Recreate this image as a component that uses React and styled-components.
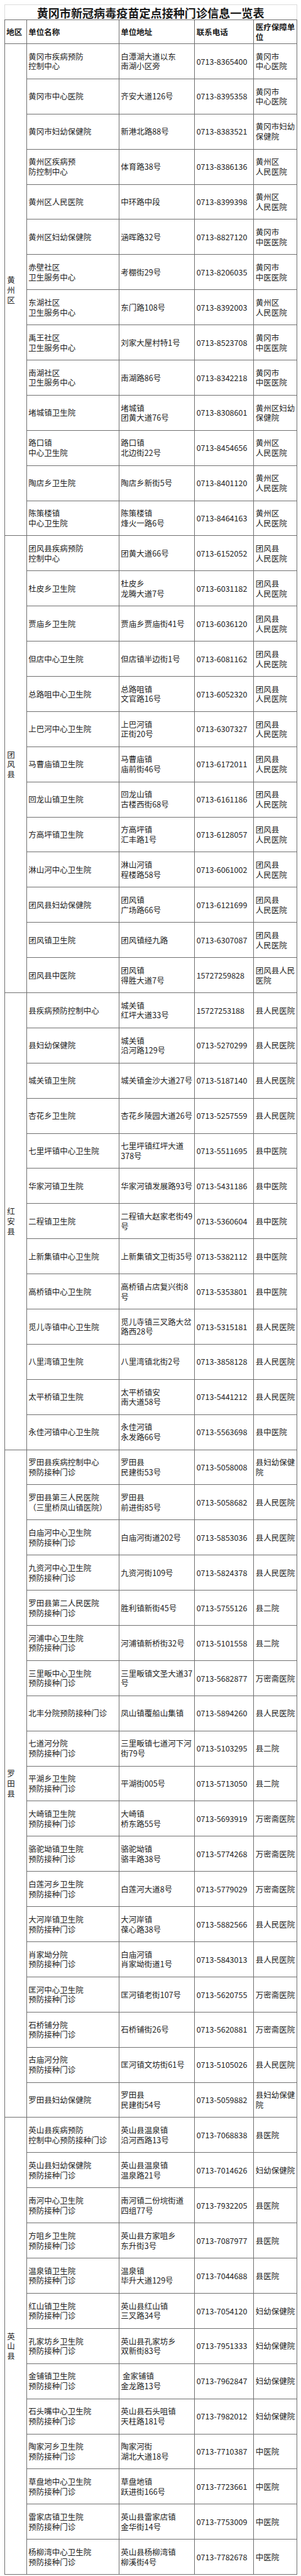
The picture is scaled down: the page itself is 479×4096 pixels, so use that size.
import React from "react";
import styled, { createGlobalStyle } from "styled-components";

const GlobalStyle = createGlobalStyle`
  body {
    margin: 0;
    background: #fff;
    font-family: "Noto Sans CJK SC", "Noto Sans", sans-serif;
    color: #222;
  }
`;

const LINE = "#6f6f6f";

const Page = styled.div`
  width: 479px;
  box-sizing: border-box;
  padding: 7.25px 6.5px 0 6.7px;
`;

const TitleBox = styled.div`
  height: 24px;
  box-sizing: border-box;
  border: 1px solid #dcdcdc;
  border-bottom: none;
  display: flex;
  align-items: center;
  justify-content: center;
  font-size: 18.1px;
  font-weight: 700;
  color: #1a1a1a;
  letter-spacing: 0;
`;

const Table = styled.div`
  display: grid;
  grid-template-columns: 35.1px 147px 120.4px 94.2px 68.6px;
  grid-template-rows: 37.7px;
  grid-auto-rows: 55.9px;
  border-top: 1px solid ${LINE};
  border-left: 1px solid ${LINE};
`;

const Cell = styled.div`
  box-sizing: border-box;
  border-right: 1px solid ${LINE};
  border-bottom: 1px solid ${LINE};
  padding-left: 2.5px;
  display: flex;
  align-items: center;
  font-size: 12.5px;
  line-height: 15.7px;
  white-space: pre;
`;

const HeadCell = styled(Cell)`
  font-weight: 700;
  color: #1a1a1a;
`;

const RegionCell = styled(Cell)`
  grid-row: span ${(p) => p.$span};
  padding-left: 3.5px;
  white-space: pre-line;
`;

const headers = ["地区", "单位名称", "单位地址", "联系电话", "医疗保障单\n位"];

const groups = [
  {
    region: "黄州区",
    rows: [
      ["黄冈市疾病预防\n控制中心", "白潭湖大道以东\n南湖小区旁", "0713-8365400", "黄冈市\n中心医院"],
      ["黄冈市中心医院", "齐安大道126号", "0713-8395358", "黄冈市\n中心医院"],
      ["黄冈市妇幼保健院", "新港北路88号", "0713-8383521", "黄冈市妇幼\n保健院"],
      ["黄州区疾病预\n防控制中心", "体育路38号", "0713-8386136", "黄州区\n人民医院"],
      ["黄州区人民医院", "中环路中段", "0713-8399398", "黄州区\n人民医院"],
      ["黄州区妇幼保健院", "涵晖路32号", "0713-8827120", "黄冈市\n中医医院"],
      ["赤壁社区\n卫生服务中心", "考棚街29号", "0713-8206035", "黄冈市\n中医医院"],
      ["东湖社区\n卫生服务中心", "东门路108号", "0713-8392003", "黄州区\n人民医院"],
      ["禹王社区\n卫生服务中心", "刘家大屋村特1号", "0713-8523708", "黄冈市\n中医医院"],
      ["南湖社区\n卫生服务中心", "南湖路86号", "0713-8342218", "黄冈市\n中医医院"],
      ["堵城镇卫生院", "堵城镇\n团黄大道76号", "0713-8308601", "黄州区妇幼\n保健院"],
      ["路口镇\n中心卫生院", "路口镇\n北边街22号", "0713-8454656", "黄州区\n人民医院"],
      ["陶店乡卫生院", "陶店乡新街5号", "0713-8401120", "黄州区\n人民医院"],
      ["陈策楼镇\n中心卫生院", "陈策楼镇\n烽火一路6号", "0713-8464163", "黄州区\n人民医院"],
    ],
  },
  {
    region: "团风县",
    rows: [
      ["团风县疾病预防\n控制中心", "团黄大道66号", "0713-6152052", "团风县\n人民医院"],
      ["杜皮乡卫生院", "杜皮乡\n龙腾大道7号", "0713-6031182", "团风县\n人民医院"],
      ["贾庙乡卫生院", "贾庙乡贾庙街41号", "0713-6036120", "团风县\n人民医院"],
      ["但店中心卫生院", "但店镇半边街1号", "0713-6081162", "团风县\n人民医院"],
      ["总路咀中心卫生院", "总路咀镇\n文官路16号", "0713-6052320", "团风县\n人民医院"],
      ["上巴河中心卫生院", "上巴河镇\n正街20号", "0713-6307327", "团风县\n人民医院"],
      ["马曹庙镇卫生院", "马曹庙镇\n庙前街46号", "0713-6172011", "团风县\n人民医院"],
      ["回龙山镇卫生院", "回龙山镇\n古楼西街68号", "0713-6161186", "团风县\n人民医院"],
      ["方高坪镇卫生院", "方高坪镇\n汇丰路1号", "0713-6128057", "团风县\n人民医院"],
      ["淋山河中心卫生院", "淋山河镇\n程楼路58号", "0713-6061002", "团风县\n人民医院"],
      ["团风县妇幼保健院", "团风镇\n广场路66号", "0713-6121699", "团风县\n人民医院"],
      ["团风镇卫生院", "团风镇经九路", "0713-6307087", "团风县\n人民医院"],
      ["团风县中医院", "团风镇\n得胜大道7号", "15727259828", "团风县人民\n医院"],
    ],
  },
  {
    region: "红安县",
    rows: [
      ["县疾病预防控制中心", "城关镇\n红坪大道33号", "15727253188", "县人民医院"],
      ["县妇幼保健院", "城关镇\n沿河路129号", "0713-5270299", "县人民医院"],
      ["城关镇卫生院", "城关镇金沙大道27号", "0713-5187140", "县人民医院"],
      ["杏花乡卫生院", "杏花乡陵园大道26号", "0713-5257559", "县人民医院"],
      ["七里坪镇中心卫生院", "七里坪镇红坪大道\n378号", "0713-5511695", "县中医院"],
      ["华家河镇卫生院", "华家河镇发展路93号", "0713-5431186", "县中医院"],
      ["二程镇卫生院", "二程镇大赵家老街49\n号", "0713-5360604", "县中医院"],
      ["上新集镇中心卫生院", "上新集镇文卫街35号", "0713-5382112", "县中医院"],
      ["高桥镇中心卫生院", "高桥镇占店复兴街8\n号", "0713-5353801", "县中医院"],
      ["觅儿寺镇中心卫生院", "觅儿寺镇三叉路大岔\n路西28号", "0713-5315181", "县人民医院"],
      ["八里湾镇卫生院", "八里湾镇北街2号", "0713-3858128", "县人民医院"],
      ["太平桥镇卫生院", "太平桥镇安\n南大道58号", "0713-5441212", "县人民医院"],
      ["永佳河镇中心卫生院", "永佳河镇\n永发路66号", "0713-5563698", "县中医院"],
    ],
  },
  {
    region: "罗田县",
    rows: [
      ["罗田县疾病控制中心\n预防接种门诊", "罗田县\n民建街53号", "0713-5058008", "县妇幼保健\n院"],
      ["罗田县第三人民医院\n（三里桥凤山镇医院）", "罗田县\n前进街85号", "0713-5058682", "县人民医院"],
      ["白庙河中心卫生院\n预防接种门诊", "白庙河街道202号", "0713-5853036", "县人民医院"],
      ["九资河中心卫生院\n预防接种门诊", "九资河街109号", "0713-5824378", "县人民医院"],
      ["罗田县第二人民医院\n预防接种门诊", "胜利镇新街45号", "0713-5755126", "县二院"],
      ["河浦中心卫生院\n预防接种门诊", "河浦镇新桥街32号", "0713-5101558", "县二院"],
      ["三里畈中心卫生院\n预防接种门诊", "三里畈镇文圣大道37\n号", "0713-5682877", "万密斋医院"],
      ["北丰分院预防接种门诊", "凤山镇覆船山集镇", "0713-5894260", "县人民医院"],
      ["七道河分院\n预防接种门诊", "三里畈镇七道河下河\n街79号", "0713-5103295", "县二院"],
      ["平湖乡卫生院\n预防接种门诊", "平湖街005号", "0713-5713050", "县二院"],
      ["大崎镇卫生院\n预防接种门诊", "大崎镇\n桥东路55号", "0713-5693919", "万密斋医院"],
      ["骆驼坳镇卫生院\n预防接种门诊", "骆驼坳镇\n骆丰路38号", "0713-5774268", "万密斋医院"],
      ["白莲河乡卫生院\n预防接种门诊", "白莲河大道8号", "0713-5779029", "万密斋医院"],
      ["大河岸镇卫生院\n预防接种门诊", "大河岸镇\n葆心路38号", "0713-5882566", "县人民医院"],
      ["肖家坳分院\n预防接种门诊", "白庙河镇\n肖家坳街道1号", "0713-5843013", "县人民医院"],
      ["匡河中心卫生院\n预防接种门诊", "匡河镇老街107号", "0713-5620755", "万密斋医院"],
      ["石桥铺分院\n预防接种门诊", "石桥铺街26号", "0713-5620881", "万密斋医院"],
      ["古庙河分院\n预防接种门诊", "匡河镇文坊街61号", "0713-5105026", "县人民医院"],
      ["罗田县妇幼保健院", "罗田县\n民建街54号", "0713-5059882", "县妇幼保健\n院"],
    ],
  },
  {
    region: "英山县",
    rows: [
      ["英山县疾病预防\n控制中心预防接种门诊", "英山县温泉镇\n沿河西路13号", "0713-7068838", "县医院"],
      ["英山县妇幼保健院\n预防接种门诊", "英山县温泉镇\n温泉路21号", "0713-7014626", "妇幼保健院"],
      ["南河中心卫生院\n预防接种门诊", "南河镇二份垸街道\n四组77号", "0713-7932205", "县医院"],
      ["方咀乡卫生院\n预防接种门诊", "英山县方家咀乡\n东升街3号", "0713-7087977", "县医院"],
      ["温泉镇卫生院\n预防接种门诊", "温泉镇\n毕升大道129号", "0713-7044688", "县医院"],
      ["红山镇卫生院\n预防接种门诊", "英山县红山镇\n三叉路34号", "0713-7054120", "妇幼保健院"],
      ["孔家坊乡卫生院\n预防接种门诊", "英山县孔家坊乡\n双新街83号", "0713-7951333", "妇幼保健院"],
      ["金铺镇卫生院\n预防接种门诊", " 金家铺镇\n金龙路13号", "0713-7962847", "妇幼保健院"],
      ["石头嘴中心卫生院\n预防接种门诊", "英山县石头咀镇\n天柱路181号", "0713-7982012", "妇幼保健院"],
      ["陶家河乡卫生院\n预防接种门诊", "陶家河街\n湖北大道18号", "0713-7710387", "中医院"],
      ["草盘地中心卫生院\n预防接种门诊", "草盘地镇\n跃进街166号", "0713-7723661", "中医院"],
      ["雷家店镇卫生院\n预防接种门诊", "英山县雷家店镇\n金华街14号", "0713-7753009", "中医院"],
      ["杨柳湾中心卫生院\n预防接种门诊", "英山县杨柳湾镇\n柳溪街4号", "0713-7782678", "中医院"],
    ],
  },
];

const App = () => {
  return (
    <Page>
      <GlobalStyle />
      <TitleBox>黄冈市新冠病毒疫苗定点接种门诊信息一览表</TitleBox>
      <Table>
        {headers.map((h) => (
          <HeadCell key={h}>{h}</HeadCell>
        ))}
        {groups.map((g) => (
          <React.Fragment key={g.region}>
            <RegionCell $span={g.rows.length}>{g.region.split("").join("\n")}</RegionCell>
            {g.rows.map((r, i) =>
              r.map((text, j) => <Cell key={`${g.region}-${i}-${j}`}>{text}</Cell>)
            )}
          </React.Fragment>
        ))}
      </Table>
    </Page>
  );
};

export default App;
